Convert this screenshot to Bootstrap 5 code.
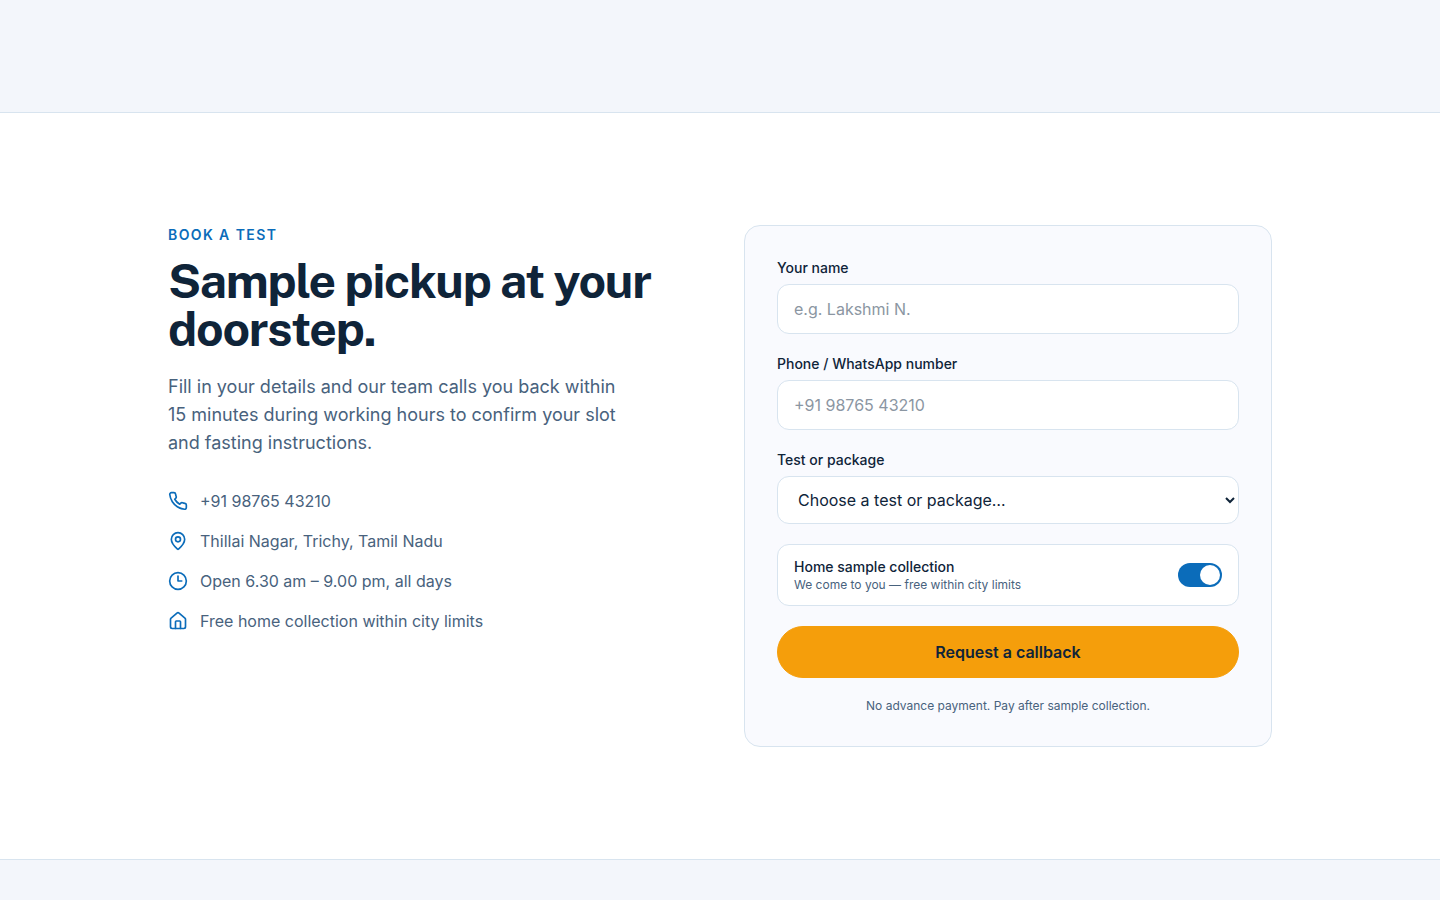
<!DOCTYPE html>
<html lang="en">
<head>
<meta charset="utf-8">
<meta name="viewport" content="width=device-width, initial-scale=1">
<title>Book a test</title>
<link href="https://cdn.jsdelivr.net/npm/bootstrap@5.3.0/dist/css/bootstrap.min.css" rel="stylesheet">
<style>
  :root { --ink: #0f2439; --muted: #48627d; --blue: #0b6cba; --line: #d8e4ef; --tint: #f3f6fb; }
  body { font-family: Inter, "Noto Sans", sans-serif; color: var(--ink); background: var(--tint); }
  .band { padding-top: 112px; }
  .booking { padding: 112px 0; background: #fff; border-top: 1px solid var(--line); border-bottom: 1px solid var(--line); }
  .wrap { max-width: 1152px; padding: 0 24px; }
  .eyebrow { font-size: 14px; line-height: 20px; font-weight: 600; letter-spacing: .1em; color: var(--blue); margin-bottom: 12px; }
  .headline { font-family: "Public Sans", Inter, sans-serif; font-size: 48px; line-height: 48px; font-weight: 700; letter-spacing: -.025em; margin-bottom: 20px; }
  .intro { font-size: 18px; line-height: 28px; max-width: 448px; color: var(--muted); margin-bottom: 32px; }
  .contacts { color: var(--muted); }
  .contacts a { color: inherit; text-decoration: none; }
  .contacts svg { width: 20px; height: 20px; flex: none; color: var(--blue); }
  .panel { padding: 32px; gap: 20px; background: #f9fafe; border: 1px solid var(--line); border-radius: 16px; }
  .field-label { display: block; font-size: 14px; line-height: 20px; font-weight: 500; margin-bottom: 6px; }
  .field { display: block; width: 100%; padding: 12px 16px; line-height: 24px; color: var(--ink); background: #fff; border: 1px solid var(--line); border-radius: 12px; }
  select.field { height: 48px; }
  .field::placeholder { color: #8b96a2; opacity: 1; }
  .option { padding: 12px 16px; background: #fff; border: 1px solid var(--line); border-radius: 12px; }
  .option-title { font-size: 14px; line-height: 20px; font-weight: 500; }
  .fine { font-size: 12px; line-height: 16px; color: var(--muted); }
  .toggle.form-check-input { width: 44px; height: 24px; margin: 0; flex: none; border: 0; border-radius: 12px; background: #cbd5e1; padding: 2px; display: flex; }
  .toggle.form-check-input::before { content: ""; width: 20px; height: 20px; border-radius: 50%; background: #fff; }
  .toggle.form-check-input:checked { background: var(--blue); justify-content: flex-end; }
  .cta, .cta:hover { padding: 13px 24px; line-height: 24px; font-weight: 600; color: var(--ink); background: #f59e0b; border: 1px solid #f59e0b; }
</style>
</head>
<body>
<div class="band"></div>
<section class="booking">
  <div class="container-fluid wrap">
    <div class="row gx-5 gy-5 mt-0">
      <div class="col-md-6 mt-0">
        <p class="eyebrow text-uppercase">Book a test</p>
        <h2 class="headline">Sample pickup at your doorstep.</h2>
        <p class="intro">Fill in your details and our team calls you back within 15 minutes during working hours to confirm your slot and fasting instructions.</p>
        <ul class="contacts list-unstyled d-flex flex-column gap-3 mb-0">
          <li class="d-flex align-items-center">
            <svg class="me-2" viewBox="0 0 24 24" fill="none" stroke="currentColor" stroke-width="2" stroke-linecap="round" stroke-linejoin="round" aria-hidden="true"><path d="M22 16.92v3a2 2 0 0 1-2.18 2 19.79 19.79 0 0 1-8.63-3.07 19.5 19.5 0 0 1-6-6 19.79 19.79 0 0 1-3.07-8.67A2 2 0 0 1 4.11 2h3a2 2 0 0 1 2 1.72 12.84 12.84 0 0 0 .7 2.81 2 2 0 0 1-.45 2.11L8.09 9.91a16 16 0 0 0 6 6l1.27-1.27a2 2 0 0 1 2.11-.45 12.84 12.84 0 0 0 2.81.7A2 2 0 0 1 22 16.92z"/></svg>
            <a class="ms-1" href="tel:+919876543210">+91 98765 43210</a>
          </li>
          <li class="d-flex align-items-center">
            <svg class="me-2" viewBox="0 0 24 24" fill="none" stroke="currentColor" stroke-width="2" stroke-linecap="round" stroke-linejoin="round" aria-hidden="true"><path d="M20 10c0 4.993-5.539 10.193-7.399 11.799a1 1 0 0 1-1.202 0C9.539 20.193 4 14.993 4 10a8 8 0 0 1 16 0"/><circle cx="12" cy="10" r="3"/></svg>
            <span class="ms-1">Thillai Nagar, Trichy, Tamil Nadu</span>
          </li>
          <li class="d-flex align-items-center">
            <svg class="me-2" viewBox="0 0 24 24" fill="none" stroke="currentColor" stroke-width="2" stroke-linecap="round" stroke-linejoin="round" aria-hidden="true"><circle cx="12" cy="12" r="10"/><path d="M12 6v6h4.500"/></svg>
            <span class="ms-1">Open 6.30 am – 9.00 pm, all days</span>
          </li>
          <li class="d-flex align-items-center">
            <svg class="me-2" viewBox="0 0 24 24" fill="none" stroke="currentColor" stroke-width="2" stroke-linecap="round" stroke-linejoin="round" aria-hidden="true"><path d="M15 21v-8a1 1 0 0 0-1-1h-4a1 1 0 0 0-1 1v8"/><path d="M3 10a2 2 0 0 1 .709-1.528l7-6a2 2 0 0 1 2.582 0l7 6A2 2 0 0 1 21 10v9a2 2 0 0 1-2 2H5a2 2 0 0 1-2-2z"/></svg>
            <span class="ms-1">Free home collection within city limits</span>
          </li>
        </ul>
      </div>
      <div class="col-md-6 mt-md-0">
        <form class="panel d-flex flex-column">
          <div>
            <label class="field-label" for="name">Your name</label>
            <input class="field" id="name" type="text" placeholder="e.g. Lakshmi N.">
          </div>
          <div>
            <label class="field-label" for="phone">Phone / WhatsApp number</label>
            <input class="field" id="phone" type="tel" placeholder="+91 98765 43210">
          </div>
          <div>
            <label class="field-label" for="test">Test or package</label>
            <select class="field" id="test"><option>Choose a test or package…</option></select>
          </div>
          <div class="option d-flex align-items-center justify-content-between gap-3">
            <label for="home"><span class="option-title d-block">Home sample collection</span><span class="fine d-block">We come to you — free within city limits</span></label>
            <input class="toggle form-check-input" id="home" type="checkbox" role="switch" checked>
          </div>
          <button class="cta btn rounded-pill w-100" type="button">Request a callback</button>
          <p class="fine text-center mb-0">No advance payment. Pay after sample collection.</p>
        </form>
      </div>
    </div>
  </div>
</section>
<script src="https://cdn.jsdelivr.net/npm/bootstrap@5.3.0/dist/js/bootstrap.bundle.min.js"></script>
</body>
</html>
